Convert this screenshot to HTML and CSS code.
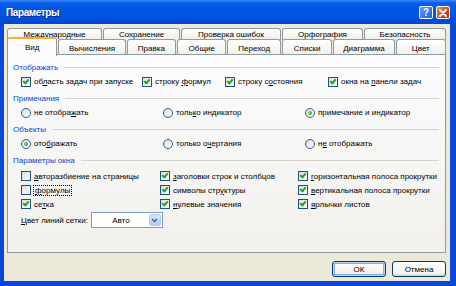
FILE: index.html
```html
<!DOCTYPE html>
<html lang="ru">
<head>
    <meta charset="UTF-8">
    <title>Параметры</title>
    <link rel="stylesheet" href="styles.css">
</head>
<body>
    <div class="window">
        <div class="titlebar">
            <span class="title">Параметры</span>
            <div class="caption">
                <span class="cap-btn help">?</span>
                <span class="cap-btn close">
                    <svg width="8" height="8" viewBox="0 0 8 8"><path d="M1 1 L7 7 M7 1 L1 7" stroke="#fff" stroke-width="1.8" stroke-linecap="round"/></svg>
                </span>
            </div>
        </div>

        <div class="frame">
            <div class="tabs">
                <div class="tab-row back">
                    <div class="tab"><span>Ме<u>ж</u>дународные</span></div>
                    <div class="tab">Сохранение</div>
                    <div class="tab">Проверка ошибок</div>
                    <div class="tab">Орфография</div>
                    <div class="tab">Безопасность</div>
                </div>
                <div class="tab-row front">
                    <div class="tab active">Вид</div>
                    <div class="tab">Вычисления</div>
                    <div class="tab">Правка</div>
                    <div class="tab">Общие</div>
                    <div class="tab">Переход</div>
                    <div class="tab">Списки</div>
                    <div class="tab">Диаграмма</div>
                    <div class="tab">Цвет</div>
                </div>
            </div>

            <div class="panel">
                <div class="group-title">Отображать</div>
                <div class="row row-show">
                    <label class="opt"><span class="cb on"></span><span>об<u>л</u>асть задач при запуске</span></label>
                    <label class="opt"><span class="cb on"></span><span>строку <u>ф</u>ормул</span></label>
                    <label class="opt"><span class="cb on"></span><span>строку с<u>о</u>стояния</span></label>
                    <label class="opt"><span class="cb on"></span><span>окна на <u>п</u>анели задач</span></label>
                </div>

                <div class="group-title">Примечания</div>
                <div class="row row-radio">
                    <label class="opt"><span class="rb"></span><span>не отобра<u>ж</u>ать</span></label>
                    <label class="opt"><span class="rb"></span><span>толь<u>к</u>о индикатор</span></label>
                    <label class="opt"><span class="rb on"></span><span>примечание и ин<u>д</u>икатор</span></label>
                </div>

                <div class="group-title">Объекты</div>
                <div class="row row-radio">
                    <label class="opt"><span class="rb on"></span><span>ото<u>б</u>ражать</span></label>
                    <label class="opt"><span class="rb"></span><span>только о<u>ч</u>ертания</span></label>
                    <label class="opt"><span class="rb"></span><span>н<u>е</u> отображать</span></label>
                </div>

                <div class="group-title">Параметры окна</div>
                <div class="params">
                    <label class="opt"><span class="cb"></span><span><u>а</u>вторазбиение на страницы</span></label>
                    <label class="opt"><span class="cb on"></span><span><u>з</u>аголовки строк и столбцов</span></label>
                    <label class="opt"><span class="cb on"></span><span><u>г</u>оризонтальная полоса прокрутки</span></label>
                    <label class="opt"><span class="cb"></span><span class="focus"><u>ф</u>ормулы</span></label>
                    <label class="opt"><span class="cb on"></span><span>символы стр<u>у</u>ктуры</span></label>
                    <label class="opt"><span class="cb on"></span><span><u>в</u>ертикальная полоса прокрутки</span></label>
                    <label class="opt"><span class="cb on"></span><span>се<u>т</u>ка</span></label>
                    <label class="opt"><span class="cb on"></span><span><u>н</u>улевые значения</span></label>
                    <label class="opt"><span class="cb on"></span><span><u>я</u>рлычки листов</span></label>
                </div>

                <div class="grid-color">
                    <span><u>Ц</u>вет линий сетки:</span>
                    <div class="combo">
                        <span class="combo-value">Авто</span>
                        <span class="combo-btn">
                            <svg width="7" height="5" viewBox="0 0 7 5"><path d="M1 1 L3.5 3.5 L6 1" fill="none" stroke="#4D6185" stroke-width="1.5"/></svg>
                        </span>
                    </div>
                </div>
            </div>

            <div class="dlg-buttons">
                <button class="btn default">ОК</button>
                <button class="btn">Отмена</button>
            </div>
        </div>
    </div>
</body>
</html>
```

FILE: styles.css
```css
body {
    margin: 0;
    width: 456px;
    height: 286px;
    overflow: hidden;
    font-family: "Liberation Sans", Arial, sans-serif;
    font-size: 8px;
    color: #000;
}

u {
    text-decoration-thickness: 1px;
    text-underline-offset: 1px;
}

.window {
    display: flex;
    flex-direction: column;
    height: 286px;
}

/* title bar */

.titlebar {
    height: 24px;
    display: flex;
    align-items: center;
    justify-content: space-between;
    padding: 1px 6px 0 6px;
    box-sizing: border-box;
    background: linear-gradient(#3A88FB 0, #0A5EEA 3px, #0057E6 9px, #0053E0 17px, #004AD8 22px, #0646CC 24px);
}

.title {
    color: #fff;
    font-weight: bold;
    font-size: 10px;
    letter-spacing: -0.4px;
    text-shadow: 1px 1px #0B2A8A;
}

.caption {
    display: flex;
    gap: 3px;
}

.cap-btn {
    width: 14px;
    height: 13px;
    box-sizing: border-box;
    border: 1px solid #fff;
    border-radius: 2px;
    display: flex;
    align-items: center;
    justify-content: center;
    color: #fff;
    font-weight: bold;
    font-size: 10px;
}

.help {
    background: linear-gradient(135deg, #5C9BFF, #1A5FE6);
}

.close {
    background: linear-gradient(135deg, #F08A6A, #D6401C 60%, #C3330F);
}

/* window body */

.frame {
    flex: 1;
    display: flex;
    flex-direction: column;
    background: #ECE9D8;
    border: solid #0A47D6;
    border-width: 0 6px 5px 4px;
    padding: 4px 4px 4px 3px;
}

.tab-row {
    display: grid;
    column-gap: 1px;
}

.back {
    grid-template-columns: 95fr 77fr 100fr 81fr 82fr;
    height: 12px;
}

.front {
    grid-template-columns: 51fr 68fr 50fr 50fr 54fr 51fr 62fr 51fr;
    height: 15px;
    margin-top: -1px;
}

.tab {
    border: 1px solid #919B9C;
    border-bottom: none;
    border-radius: 3px 3px 0 0;
    background: linear-gradient(#FFFFFF, #EEEDE8);
    display: flex;
    align-items: center;
    justify-content: center;
    white-space: nowrap;
}

.tab.active {
    background: #FCFCFE;
    border-top: 2px solid #F5AE3C;
    margin-top: -2px;
    height: 19px;
    box-sizing: border-box;
    z-index: 1;
}

.panel {
    flex: 1;
    border: 1px solid #919B9C;
    background: linear-gradient(#FCFCFE, #F1F0EC);
    padding: 5px 6px 0 5px;
}

.group-title {
    display: flex;
    align-items: center;
    gap: 6px;
    height: 14px;
    color: #0046D5;
}

.group-title::after {
    content: "";
    flex: 1;
    height: 1px;
    background: #D5D4C8;
}

.row {
    display: grid;
    height: 15px;
    align-items: center;
    padding-left: 8px;
    margin-bottom: 2px;
}

.row-show {
    grid-template-columns: 121px 83px 103px 1fr;
}

.row-radio {
    grid-template-columns: 142px 142px 1fr;
}

.params {
    display: grid;
    grid-template-columns: 139px 138px 1fr;
    grid-auto-rows: 14px;
    align-items: center;
    padding: 2px 0 0 8px;
}

.opt {
    display: flex;
    align-items: center;
    gap: 3px;
    white-space: nowrap;
}

.focus {
    outline: 1px dotted #000;
    padding: 0 1px;
}

/* checkboxes and radios */

.cb,
.rb {
    width: 10px;
    height: 10px;
    box-sizing: border-box;
    border: 1px solid #1C5180;
    background: linear-gradient(135deg, #DCDCD7, #FFFFFF);
    flex: none;
    display: flex;
    align-items: center;
    justify-content: center;
}

.cb.on::after {
    content: "";
    width: 2px;
    height: 4px;
    border: solid #21A121;
    border-width: 0 2px 2px 0;
    transform: translate(0, -1px) rotate(40deg);
}

.rb {
    border-radius: 50%;
    border-color: #2B5C94;
}

.rb.on::after {
    content: "";
    width: 4px;
    height: 4px;
    border-radius: 50%;
    background: radial-gradient(circle at 35% 35%, #6EDB6E, #21A121);
}

/* grid colour */

.grid-color {
    display: flex;
    align-items: center;
    gap: 3px;
    padding-left: 8px;
    margin-top: 1px;
}

.combo {
    width: 72px;
    height: 16px;
    box-sizing: border-box;
    border: 1px solid #7F9DB9;
    background: #fff;
    display: flex;
    align-items: center;
    padding: 1px;
}

.combo-value {
    flex: 1;
    text-align: center;
}

.combo-btn {
    width: 12px;
    height: 12px;
    border-radius: 2px;
    background: linear-gradient(#D6E4FD, #B4CBF7);
    border: 1px solid #B9CCF4;
    box-sizing: border-box;
    display: flex;
    align-items: center;
    justify-content: center;
}

/* dialog buttons */

.dlg-buttons {
    display: flex;
    justify-content: flex-end;
    gap: 6px;
    margin-top: 8px;
}

.btn {
    width: 54px;
    height: 16px;
    padding: 0;
    border: 1px solid #003C74;
    border-radius: 3px;
    background: linear-gradient(#FFFFFF, #F3F2EC 80%, #D6D0C5);
    font-family: inherit;
    font-size: 8px;
    color: #000;
}

.btn.default {
    box-shadow: inset 0 0 0 1px #BCD4F6, inset 0 0 0 2px #89ADE4;
}
```
